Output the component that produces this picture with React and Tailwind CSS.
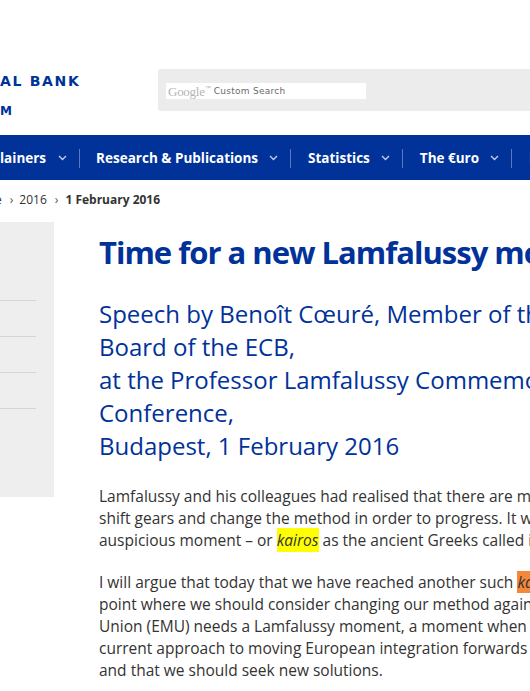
import React from "react";

const Chevron = () => (
  <svg width="9" height="6" viewBox="0 0 9 6" className="shrink-0">
    <polyline points="1,1 4.5,4.5 8,1" fill="none" stroke="#c9d2ea" strokeWidth="1.3" />
  </svg>
);

const Sep = () => <div className="w-px h-[19px] bg-[#6177bd] shrink-0" />;

export default function App() {
  const font = { fontFamily: '"Open Sans", "Noto Sans", sans-serif' };
  return (
    <div className="w-[530px] h-[691px] overflow-hidden bg-white" style={font}>
      <div className="w-[900px]">
        {/* header */}
        <div className="flex h-[135px]">
          <div className="w-[158px] pt-[73px] text-[#003299]" style={{ fontFamily: '"DejaVu Sans", sans-serif' }}>
            <div className="text-[14px] font-bold tracking-[0.12em] leading-[16px] whitespace-nowrap">AL BANK</div>
            <div className="mt-[16px] text-[12px] font-bold leading-[12px]">M</div>
          </div>
          <div className="mt-[69px] h-[42px] w-[600px] bg-[#ececec] rounded-[3px] pl-[8px] pt-[14px]">
            <div className="w-[200px] h-[16px] bg-white flex items-center pl-[2px]">
              <span className="text-[13px] leading-none text-[#b4b4b4] tracking-[-0.02em]" style={{ fontFamily: '"Liberation Serif", serif' }}>Google</span>
              <span className="text-[6px] leading-none text-[#b4b4b4] self-start mt-[2px]" style={{ fontFamily: '"Liberation Sans", sans-serif' }}>™</span>
              <span className="ml-[3px] text-[9px] leading-none text-[#6b6b6b] tracking-[0.03em]" style={{ fontFamily: '"DejaVu Sans", sans-serif' }}>Custom Search</span>
            </div>
          </div>
        </div>

        {/* nav */}
        <div className="h-[45px] bg-[#003299] flex items-center pt-[1px] text-white text-[13.5px] font-bold whitespace-nowrap">
          <span>lainers</span>
          <span className="ml-[12px]"><Chevron /></span>
          <span className="ml-[12px]"><Sep /></span>
          <span className="ml-[16px]">Research &amp; Publications</span>
          <span className="ml-[11px]"><Chevron /></span>
          <span className="ml-[12px]"><Sep /></span>
          <span className="ml-[17px]">Statistics</span>
          <span className="ml-[11px]"><Chevron /></span>
          <span className="ml-[12px]"><Sep /></span>
          <span className="ml-[17px]">The €uro</span>
          <span className="ml-[11px]"><Chevron /></span>
          <span className="ml-[12px]"><Sep /></span>
          <span className="ml-[17px]">Payments &amp; Markets</span>
        </div>

        {/* breadcrumb */}
        <div className="h-[40px] flex items-center text-[12px] text-[#333] whitespace-nowrap">
          <span className="-ml-[5px]">e</span>
          <span className="ml-[8px] text-[#555]">›</span>
          <span className="ml-[6px]">2016</span>
          <span className="ml-[8px] text-[#555]">›</span>
          <span className="ml-[7px] font-bold">1 February 2016</span>
        </div>

        {/* main */}
        <div className="flex mt-[2px]">
          <div className="w-[54px] h-[275px] bg-[#eeeeee] shrink-0 pt-[78px]">
            <div className="h-px w-[36px] bg-[#d6d6d6]" />
            <div className="h-px w-[36px] bg-[#d6d6d6] mt-[35px]" />
            <div className="h-px w-[36px] bg-[#d6d6d6] mt-[35px]" />
            <div className="h-px w-[36px] bg-[#d6d6d6] mt-[35px]" />
          </div>
          <div className="ml-[45px] whitespace-nowrap">
            <h1 className="mt-[10px] text-[31px] tracking-[-1px] leading-[40px] font-bold text-[#003299]">
              Time for a new Lamfalussy moment? Proposals for the future of EMU
            </h1>
            <div className="mt-[25px] text-[24px] leading-[33px] text-[#003299]">
              <div>Speech by Benoît Cœuré, Member of the Executive</div>
              <div>Board of the ECB,</div>
              <div>at the Professor Lamfalussy Commemorative</div>
              <div>Conference,</div>
              <div>Budapest, 1 February 2016</div>
            </div>
            <div className="mt-[23px] text-[15.5px] leading-[22px] text-[#333]">
              <div>Lamfalussy and his colleagues had realised that there are moments when one must</div>
              <div>shift gears and change the method in order to progress. It was, in their view, an</div>
              <div>
                auspicious moment – or{" "}
                <span className="italic bg-[#ffff00] py-[1px]">kairos</span> as the ancient Greeks called it.
              </div>
              <div className="mt-[20px]">
                I will argue that today that we have reached another such{" "}
                <span className="italic bg-[#f5873b]">kairos</span>, a
              </div>
              <div>point where we should consider changing our method again. Economic and Monetary</div>
              <div>Union (EMU) needs a Lamfalussy moment, a moment when we recognise that the</div>
              <div>current approach to moving European integration forwards has reached its limits</div>
              <div>and that we should seek new solutions.</div>
            </div>
          </div>
        </div>
      </div>
    </div>
  );
}
